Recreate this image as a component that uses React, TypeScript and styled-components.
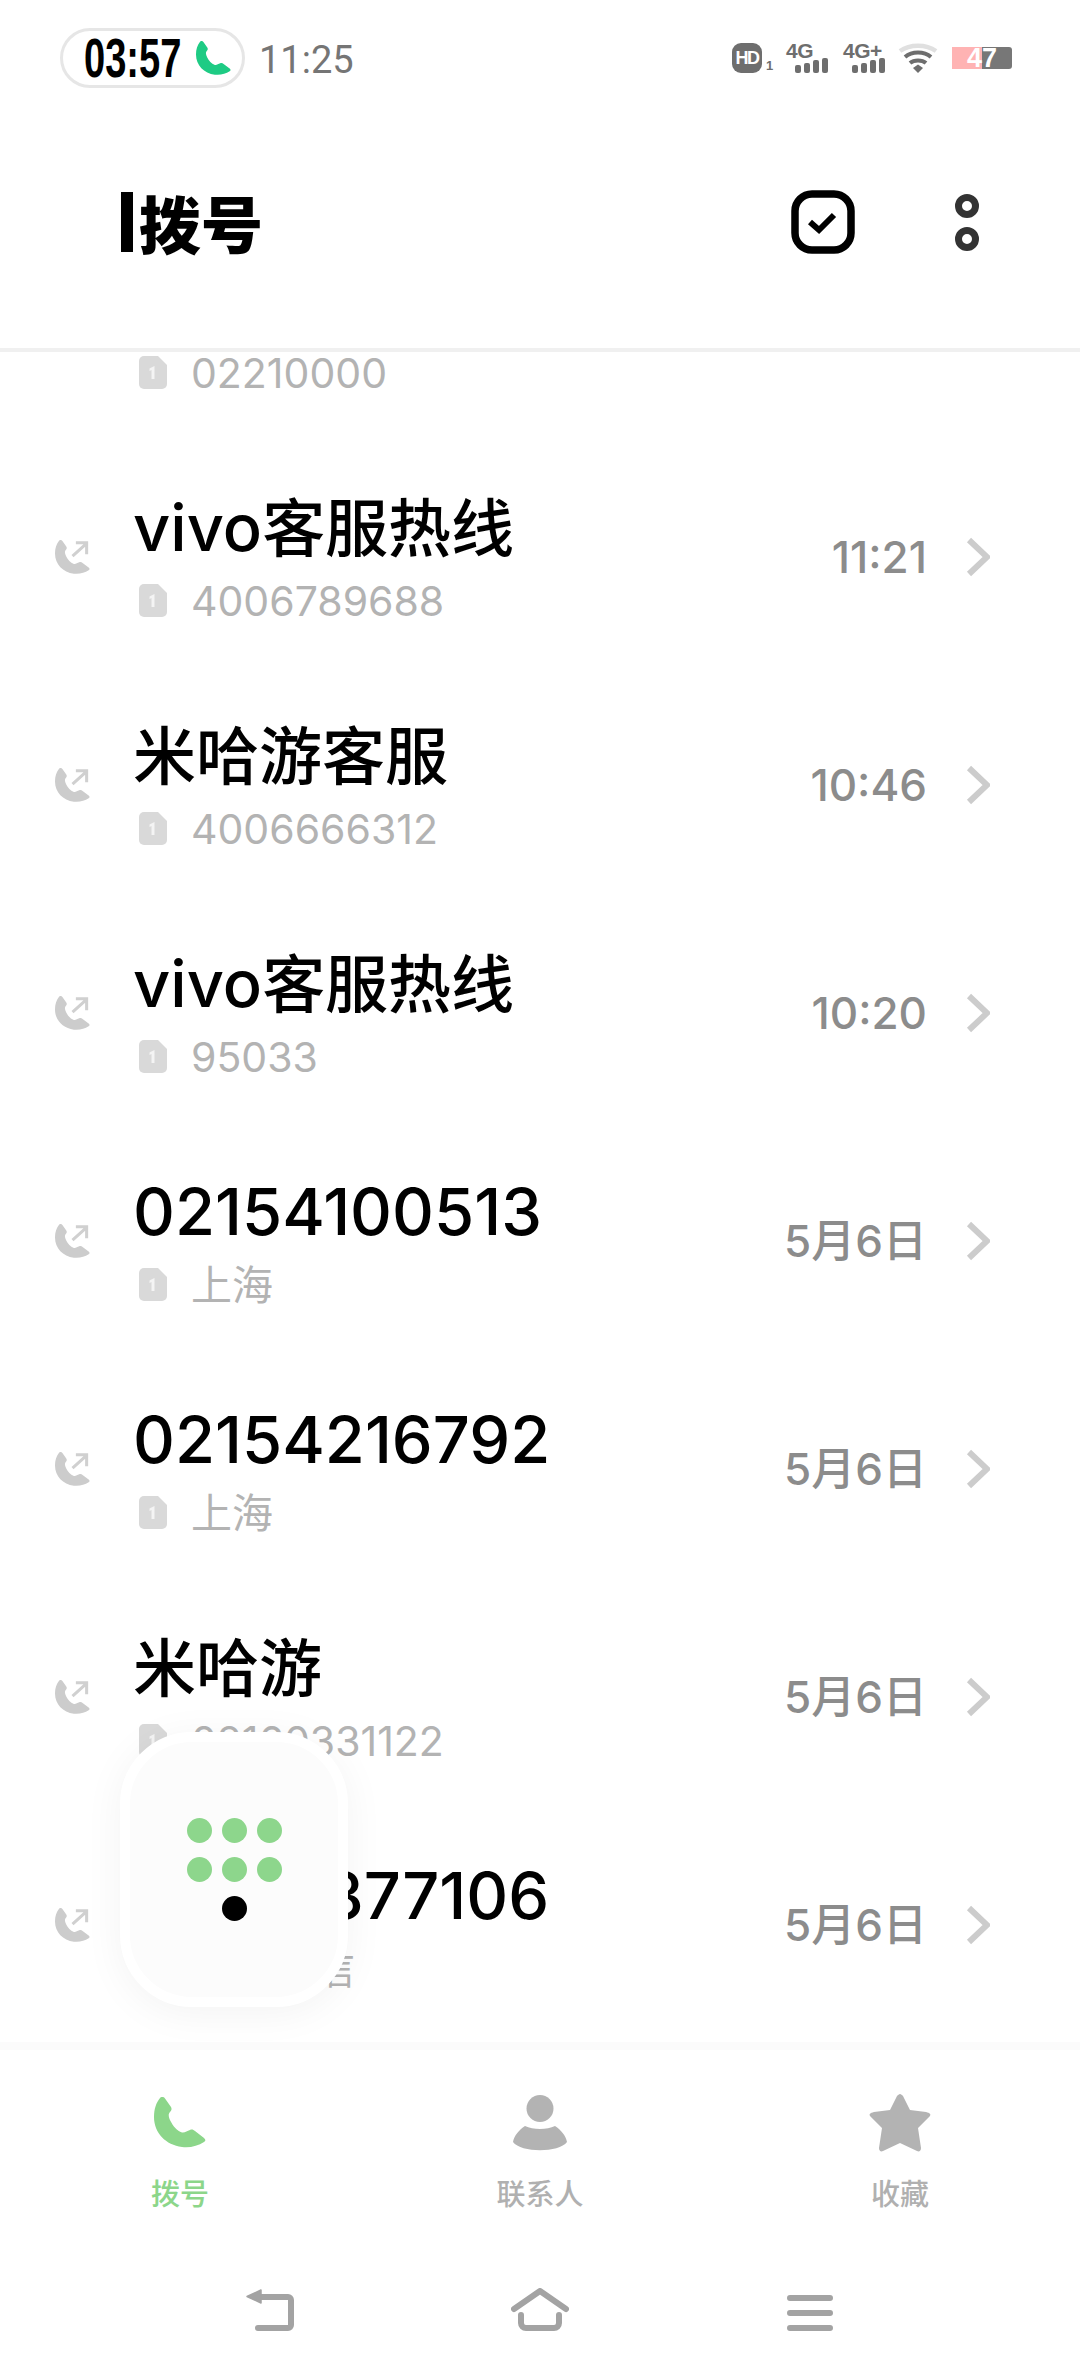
import React from "react";
import styled, { createGlobalStyle } from "styled-components";

const Global = createGlobalStyle`
  html, body { margin: 0; padding: 0; background: #fff; }
  * { box-sizing: border-box; }
`;

const CJK = `Inter, "Noto Sans CJK SC", sans-serif`;
const PHONE = "M6 1C8-1 10 0 11 1.500L17 10C18 12 17.500 13.500 16 15C14 17 14.500 20 16.500 24C19 29 23 34 28 35.500C31 36 33 34 36 33C38 32 39.500 33 41 34L50 41C52 43 51.500 44 50 45C44 49 36 51 28 50C12 48 0 36 0 20C0 12 2 6 6 1Z";

const Page = styled.div`
  width: 1080px; height: 2376px; position: relative; overflow: hidden;
  display: flex; flex-direction: column; background: #fff; font-family: ${CJK};
`;
const StatusBar = styled.div`
  height: 116px; flex: none; display: flex; align-items: center;
  padding: 0 68px 0 60px;
`;
const CallPill = styled.div`
  width: 185px; height: 60px; border: 3px solid #e6e6e6; border-radius: 30px;
  display: flex; align-items: center; padding-left: 21px; gap: 15px; flex: none;
`;
const PillTime = styled.span`
  font: 700 56px/56px "Liberation Sans", sans-serif;
  color: #000; display: inline-block; width: 97px; white-space: nowrap; flex: none;
  transform: scaleX(.68); transform-origin: left center;
`;
const Clock = styled.span`
  margin: 3px 0 0 14px; font: 400 38px Roboto, sans-serif; color: #757575;
`;
const StatusIcons = styled.div`
  margin-left: auto; display: flex; align-items: flex-end; gap: 13px; height: 30px;
`;
const HdBadge = styled.span`
  width: 30px; height: 30px; border-radius: 9px; background: #6e6e6e; color: #fff;
  font: 700 18px "Liberation Sans", sans-serif; display: flex; align-items: center; justify-content: center;
  letter-spacing: -1.500px;
`;
const SimNo = styled.span`
  font: 700 13px/14px "Liberation Sans", sans-serif; color: #6e6e6e; margin-left: -9px; width: 7px;
`;
const Signal = styled.div`
  display: flex; flex-direction: column; align-items: flex-start; width: 44px; height: 30px;
`;
const NetLabel = styled.span`
  font: 700 21px/15px "Liberation Sans", sans-serif; color: #6e6e6e; letter-spacing: -.5px;
`;
const Bars = styled.div`
  margin-left: 9px; display: flex; align-items: flex-end; gap: 3px; height: 15px;
`;
const Bar = styled.i<{ $h: number }>`
  width: 6px; height: ${p => p.$h}px; background: #6e6e6e; border-radius: 2px; display: block;
`;
const WifiWrap = styled.span`
  width: 40px; height: 30px; display: block; margin-left: -2px;
`;
const Battery = styled.div`
  width: 60px; height: 22px; margin: 0 0 4px 1px; border-radius: 0 3px 3px 0;
  background: linear-gradient(90deg, #ffb3b3 0 30px, #777 30px);
  color: #fff; font: 700 27px/22px "Liberation Sans", sans-serif; text-align: center;
`;

const Header = styled.header`
  height: 236px; flex: none; display: flex; align-items: center;
  padding: 0 101px 20px 121px; border-bottom: 4px solid #f0f0f0; background: #fff;
`;
const Caret = styled.span`
  width: 12px; height: 60px; background: #000; display: block; margin-right: 6px;
`;
const Title = styled.h1`
  margin: 0; font: 900 62px/60px "Noto Sans CJK SC", sans-serif; color: #000;
`;
const HeadActions = styled.div`
  margin-left: auto; display: flex; align-items: center; gap: 100px;
`;

const List = styled.div`
  flex: 1; min-height: 0;
`;
const PartialRow = styled.div`
  height: 91px; padding-left: 133px;
`;
const RowEl = styled.div`
  height: 228px; display: flex; align-items: center; padding: 0 90px 0 55px;
`;
const CallSlot = styled.div`
  width: 78px; flex: none; display: flex; align-items: center;
`;
const RowBody = styled.div`
  flex: 1; min-width: 0; display: flex; flex-direction: column; padding-top: 3px;
`;
const RowTitle = styled.div`
  font-size: 63px; font-weight: 500; line-height: 84px; height: 84px; color: #000; white-space: nowrap;
`;
const Latin = styled.span`
  font-size: 65px;
`;
const RowSub = styled.div<{ $short?: boolean }>`
  display: flex; align-items: center; height: ${p => (p.$short ? 41 : 62)}px; padding-left: 6px;
`;
const SubText = styled.div`
  margin-left: 24px; font-size: 41px; line-height: 40px; color: #b3b3b3; white-space: nowrap;
`;
const RowTime = styled.span`
  font-size: 44px; line-height: 56px; font-weight: 500; color: #8c8c8c; white-space: nowrap; margin-right: 39px;
`;

const BottomBand = styled.div`
  height: 8px; flex: none; background: #fbfbfb;
`;
const Tabs = styled.nav`
  height: 190px; flex: none; display: grid; grid-template-columns: repeat(3, 1fr); background: #fff;
  padding-top: 43px;
`;
const Tab = styled.div<{ $on?: boolean }>`
  display: flex; flex-direction: column; align-items: center; gap: 22px;
  color: ${p => (p.$on ? "#8cd68a" : "#b0b0b0")};
  font-size: 29px; line-height: 40px; font-weight: 500;
`;
const TabIcon = styled.div`
  height: 60px; display: flex; align-items: center; justify-content: center;
`;
const SysBar = styled.div`
  height: 136px; flex: none; display: grid; grid-template-columns: repeat(3, 270px); justify-content: center; background: #fff;
  padding-bottom: 45px; align-items: end;
`;
const SysSlot = styled.div`
  display: flex; justify-content: center; line-height: 0;
`;
const Fab = styled.div`
  position: absolute; left: 120px; top: 1732px; width: 228px; height: 275px;
  background: #fcfcfc; border: 10px solid #fff; border-radius: 72px;
  box-shadow: 0 6px 40px rgba(0,0,0,.05);
  display: flex; align-items: center; justify-content: center;
`;
const Keypad = styled.div`
  display: grid; grid-template-columns: repeat(3, 25px); gap: 14px 10px;
`;
const Dot = styled.i<{ $dark?: boolean; $col?: number }>`
  width: 25px; height: 25px; border-radius: 50%; display: block;
  background: ${p => (p.$dark ? "#000" : "#8dd68c")};
  ${p => (p.$col ? `grid-column: ${p.$col};` : "")}
`;

const Phone = ({ w, color }: { w: number; color: string }) => (
  <svg width={w} height={w} viewBox="0 0 52 52" style={{ flex: "none" }}><path d={PHONE} fill={color} /></svg>
);
const CallOut = () => (
  <svg width="35" height="35" viewBox="0 0 52 52" fill="none">
    <path d={PHONE} fill="#ccc" />
    <path d="M26 24L47 5M31 4H47V21" stroke="#d0d0d0" strokeWidth="4.500" />
  </svg>
);
const Sim = () => (
  <svg width="28" height="33" viewBox="0 0 28 33" style={{ flex: "none" }}>
    <path d="M5 0H19L28 9V28A5 5 0 0 1 23 33H5A5 5 0 0 1 0 28V5A5 5 0 0 1 5 0Z" fill="#d9d9d9" />
    <path d="M10.500 12.500L15.500 10V23H12.500V14L10.500 15Z" fill="#f4f4f4" />
  </svg>
);
const Chevron = () => (
  <svg width="24" height="40" viewBox="0 0 24 40" fill="none" style={{ flex: "none" }}><path d="M3 3L21 20L3 37" stroke="#ccc" strokeWidth="6" /></svg>
);
const CheckBox = () => (
  <svg width="64" height="64" viewBox="0 0 64 64" fill="none">
    <rect x="4" y="4" width="56" height="56" rx="17" stroke="#000" strokeWidth="7.500" />
    <path d="M19 32L28 40L43 25" stroke="#000" strokeWidth="6" />
  </svg>
);
const TwoDots = () => (
  <svg width="24" height="57" viewBox="0 0 24 57" fill="none">
    <circle cx="12" cy="12" r="8.500" stroke="#333" strokeWidth="7" />
    <circle cx="12" cy="45" r="8.500" stroke="#333" strokeWidth="7" />
  </svg>
);
const Wifi = () => (
  <svg width="40" height="30" viewBox="0 0 40 30" fill="none">
    <path d="M2 8C12 1 28 1 38 8" stroke="#e0e0e0" strokeWidth="4.500" />
    <path d="M7 14C14 8 26 8 33 14" stroke="#6e6e6e" strokeWidth="4" />
    <path d="M12 20C16 16.500 24 16.500 28 20" stroke="#6e6e6e" strokeWidth="4" />
    <path d="M15 25L20 21.500L25 25L20 30Z" fill="#6e6e6e" />
  </svg>
);
const Person = () => (
  <svg width="54" height="56" viewBox="0 0 54 56">
    <circle cx="27" cy="13.500" r="13.500" fill="#b3b3b3" />
    <path d="M12 31C20 35 34 35 42 31C48 35 53 41 54 47C46 58 8 58 0 47C1 41 6 35 12 31Z" fill="#b3b3b3" />
  </svg>
);
const Star = () => (
  <svg width="62" height="60" viewBox="0 0 62 60">
    <path d="M31 1C32 1 33 2 34 3L41 17L57 19C61 20 62 21 61 23L49 35L52 55C52 58 50 59 48 58L31 50L14 58C12 59 10 58 10 55L13 35L1 23C0 21 1 20 5 19L21 17L28 3C29 2 30 1 31 1Z" fill="#b3b3b3" />
  </svg>
);
const Back = () => (
  <svg width="48" height="43" viewBox="0 0 48 43" fill="none">
    <path d="M10 9H42A3 3 0 0 1 45 12V37A3 3 0 0 1 42 40H12" stroke="#a3a3a3" strokeWidth="6" strokeLinecap="round" />
    <path d="M1 8.500L15 2V15Z" fill="#a3a3a3" stroke="#a3a3a3" strokeWidth="1.500" strokeLinejoin="round" />
  </svg>
);
const Home = () => (
  <svg width="58" height="43" viewBox="0 0 58 43" fill="none">
    <path d="M3 21L29 3L55 21" stroke="#a3a3a3" strokeWidth="6" strokeLinecap="round" strokeLinejoin="round" />
    <path d="M10 27V35A5 5 0 0 0 15 40H43A5 5 0 0 0 48 35V27" stroke="#a3a3a3" strokeWidth="6" strokeLinecap="round" />
  </svg>
);
const Menu = () => (
  <svg width="46" height="36" viewBox="0 0 46 36" fill="none">
    <path d="M3 3H43M3 18H43M3 33H43" stroke="#a3a3a3" strokeWidth="6" strokeLinecap="round" />
  </svg>
);

const rows = [
  { latin: "vivo", cjk: "客服热线", sub: "4006789688", time: "11:21" },
  { latin: "", cjk: "米哈游客服", sub: "4006666312", time: "10:46" },
  { latin: "vivo", cjk: "客服热线", sub: "95033", time: "10:20" },
  { latin: "02154100513", cjk: "", sub: "上海", time: "5月6日" },
  { latin: "02154216792", cjk: "", sub: "上海", time: "5月6日" },
  { latin: "", cjk: "米哈游", sub: "02160331122", time: "5月6日" },
  { latin: "02158377106", cjk: "", sub: "上海电信", time: "5月6日" },
];

export default function App() {
  return (
    <Page>
      <Global />
      <StatusBar>
        <CallPill>
          <PillTime>03:57</PillTime>
          <Phone w={35} color="#1ecb84" />
        </CallPill>
        <Clock>11:25</Clock>
        <StatusIcons>
          <HdBadge>HD</HdBadge>
          <SimNo>1</SimNo>
          <Signal>
            <NetLabel>4G</NetLabel>
            <Bars>{[8, 10, 13, 15].map(h => <Bar key={h} $h={h} />)}</Bars>
          </Signal>
          <Signal>
            <NetLabel>4G+</NetLabel>
            <Bars>{[8, 10, 13, 15].map(h => <Bar key={h} $h={h} />)}</Bars>
          </Signal>
          <WifiWrap><Wifi /></WifiWrap>
          <Battery>47</Battery>
        </StatusIcons>
      </StatusBar>
      <Header>
        <Caret />
        <Title>拨号</Title>
        <HeadActions>
          <CheckBox />
          <TwoDots />
        </HeadActions>
      </Header>
      <List>
        <PartialRow>
          <RowSub $short><Sim /><SubText>02210000</SubText></RowSub>
        </PartialRow>
        {rows.map((r, i) => (
          <RowEl key={i}>
            <CallSlot><CallOut /></CallSlot>
            <RowBody>
              <RowTitle>{r.latin && <Latin>{r.latin}</Latin>}{r.cjk}</RowTitle>
              <RowSub><Sim /><SubText>{r.sub}</SubText></RowSub>
            </RowBody>
            <RowTime>{r.time}</RowTime>
            <Chevron />
          </RowEl>
        ))}
      </List>
      <BottomBand />
      <Tabs>
        <Tab $on><TabIcon><Phone w={52} color="#8cd68a" /></TabIcon>拨号</Tab>
        <Tab><TabIcon><Person /></TabIcon>联系人</Tab>
        <Tab><TabIcon><Star /></TabIcon>收藏</Tab>
      </Tabs>
      <SysBar>
        <SysSlot><Back /></SysSlot>
        <SysSlot><Home /></SysSlot>
        <SysSlot><Menu /></SysSlot>
      </SysBar>
      <Fab>
        <Keypad>
          {[0, 1, 2, 3, 4, 5].map(i => <Dot key={i} />)}
          <Dot $dark $col={2} />
        </Keypad>
      </Fab>
    </Page>
  );
}
